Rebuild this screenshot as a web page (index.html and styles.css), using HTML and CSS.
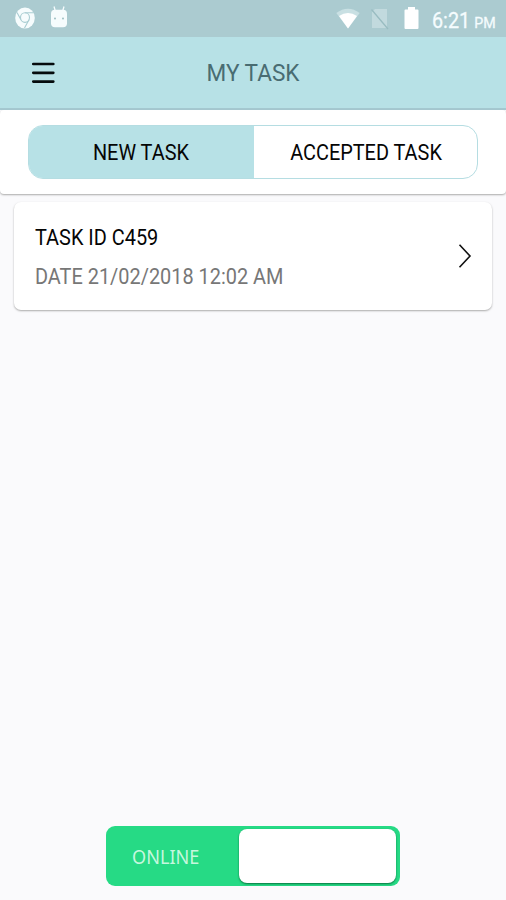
FILE: index.html
```
<!DOCTYPE html>
<html lang="en">
<head>
<meta charset="utf-8">
<title>My Task</title>
<link rel="stylesheet" href="styles.css">
</head>
<body>
<div class="statusbar">
  <svg class="chrome" width="20" height="22" viewBox="0 0 20 22"><ellipse cx="10" cy="11" rx="9.8" ry="10.6" fill="#f6fcfd"/><g fill="none" stroke="#a9cdd2" stroke-width="1.1"><ellipse cx="10" cy="10.6" rx="4.500" ry="4.800"/><path d="M10 5.800H18.500M5.800 12.500 2 5.500M14 12.800 9.500 21"/></g></svg>
  <svg class="android" width="18" height="22" viewBox="0 0 18 22"><path d="M4 .5 5.300 5M14 .5 12.700 5" stroke="#f6fcfd" stroke-width="1.300"/><rect x="1" y="3.800" width="16" height="17.500" rx="4" fill="#f6fcfd"/><circle cx="5" cy="12.500" r=".9" fill="#94b8bd"/><circle cx="13" cy="12.500" r=".9" fill="#94b8bd"/></svg>
  <span class="spacer"></span>
  <svg class="wifi" width="24" height="21" viewBox="0 0 24 21"><path d="M.3 5Q12-3.500 23.700 5L12 20.500Z" fill="#c9e0e3"/><path d="M3 8Q12 2 21 8L12 20.500Z" fill="#fff"/></svg>
  <svg class="sim" width="20" height="22" viewBox="0 0 20 22"><path d="M5 1H17V20H2V4Z" fill="#c2dade"/><path d="M1.500 1.500 18 21" stroke="#99bcc1" stroke-width="1.300"/></svg>
  <svg class="battery" width="15" height="22" viewBox="0 0 15 22"><path d="M4 0h7v2.500h2.500a1 1 0 0 1 1 1V21a1 1 0 0 1-1 1h-12a1 1 0 0 1-1-1V3.500a1 1 0 0 1 1-1H4Z" fill="#fff"/></svg>
  <span class="clock">6:21 <small>PM</small></span>
</div>
<header class="header">
  <svg class="menu" width="24" height="22" viewBox="0 0 24 22"><path d="M2.300 2H22.300M2.300 10.800H22.300M2.300 19.600H22.300" stroke="#050b0d" stroke-width="2.700" stroke-linecap="round"/></svg>
  <h1 class="title">MY TASK</h1>
</header>
<nav class="tabs">
  <div class="segments">
    <div class="segment active"><span>NEW TASK</span></div>
    <div class="segment"><span>ACCEPTED TASK</span></div>
  </div>
</nav>
<main class="content">
  <article class="card">
    <div class="details">
      <div class="task-id">TASK ID C459</div>
      <div class="date">DATE 21/02/2018 12:02 AM</div>
    </div>
    <svg width="14" height="26" viewBox="0 0 14 26"><path d="M1.500 1.800 12 13 1.500 24.200" fill="none" stroke="#111" stroke-width="1.600"/></svg>
  </article>
</main>
<footer class="footer">
  <div class="switch">
    <div class="state"><span>ONLINE</span></div>
    <div class="thumb"></div>
  </div>
</footer>
</body>
</html>
```
FILE: styles.css
```
* { box-sizing: border-box; }
body { margin: 0; height: 900px; display: flex; flex-direction: column; background: #fafafc; font-family: Roboto, sans-serif; color: #050505; overflow: hidden; }
svg { display: block; flex: none; }
.statusbar { height: 37px; flex: none; display: flex; align-items: flex-start; padding: 7px 11px 0 15px; background: #abcbd0; }
.android { margin: -1px 0 0 15px; }
.spacer { flex: 1; }
.wifi { margin: 1px 10px 0 0; }
.sim { margin: 1px 14px 0 0; }
.battery { margin-right: 13px; }
.clock { width: 63px; padding-top: 1px; color: #f5fcfe; font-size: 21.5px; line-height: 25px; white-space: nowrap; transform: scaleX(.92); transform-origin: left; -webkit-text-stroke: .3px #f5fcfe; }
.clock small { font-size: 15.5px; margin-left: -1px; }
.header { height: 73px; flex: none; display: flex; align-items: center; padding: 0 31px; background: #b7e1e6; border-bottom: 2px solid #a4c8d0; }
.title { flex: 1; margin: 0 24px 0 0; font-size: 24px; font-weight: 400; line-height: 28px; text-align: center; color: #496c72; transform: scaleX(.94); }
.tabs { height: 84px; flex: none; padding: 15px 28px 0; background: #fff; border-radius: 4px; box-shadow: 0 1px 2px #aaa; }
.segments { display: flex; height: 54px; border: 1px solid #b5dde2; border-radius: 15px; overflow: hidden; }
.segment { flex: 1; display: flex; align-items: center; justify-content: center; padding: 1px 0 0 1px; font-size: 21.5px; white-space: nowrap; }
.segment.active { flex: 0 0 225px; padding: 1px 2px 0 0; background: #b7e1e6; }
.segment span { transform: scaleX(.925); }
.content { flex: 1; padding: 8px 14px; }
.card { height: 108px; display: flex; align-items: center; justify-content: space-between; padding: 0 20px 0 21px; background: #fff; border-radius: 7px; box-shadow: 0 1px 2px #aaa; }
.details { padding-top: 2px; }
.task-id, .date { font-size: 21.5px; line-height: 39px; white-space: nowrap; transform: scaleX(.926); transform-origin: left; }
.date { color: #777; }
.footer { height: 74px; flex: none; display: flex; justify-content: center; }
.switch { width: 294px; height: 60px; display: flex; padding: 3px 4px 3px 0; background: #26da85; border-radius: 9px; }
.state { width: 133px; padding-left: 26px; font: 400 20px/55px "Noto Sans", sans-serif; color: #c5f7de; }
.state span { display: inline-block; transform: scaleX(.905); transform-origin: left; }
.thumb { flex: 1; background: #fff; border-radius: 8px; box-shadow: 0 1px 2px #08733f; }
```
